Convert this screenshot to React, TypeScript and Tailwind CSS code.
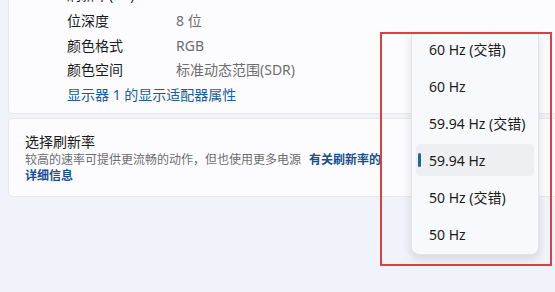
import React from "react";

const font = { fontFamily: '"Noto Sans", "Noto Sans CJK SC", sans-serif' };

const rows = [
  { label: "位深度", value: "8 位" },
  { label: "颜色格式", value: "RGB" },
  { label: "颜色空间", value: "标准动态范围(SDR)" },
];

const rates = ["60 Hz (交错)", "60 Hz", "59.94 Hz (交错)", "59.94 Hz", "50 Hz (交错)", "50 Hz"];

export default function App() {
  const selected = "59.94 Hz";

  return (
    <div
      className="relative w-[555px] h-[292px] overflow-hidden bg-[#f0f3f9] text-[#1b1b1b]"
      style={font}
    >
      <div className="pl-[8px] flex flex-col gap-[4px]">
        {/* 显示器信息 */}
        <div className="w-[570px] -mt-[16px] bg-[#fcfcfe] rounded-b-[4px] border-b border-l border-[#e6e8ec] pb-[6px]">
          {/* row scrolled mostly out of view */}
          <div className="h-[24.5px] flex items-start leading-[21px] text-[14px]">
            <span className="w-[109px] pl-[58px] shrink-0 box-content">刷新率(Hz)</span>
            <span className="text-[#6e6e6e]">59.940 Hz</span>
          </div>
          {rows.map((r) => (
            <div key={r.label} className="h-[24.5px] flex items-center text-[14px]">
              <span className="w-[109px] pl-[58px] shrink-0 box-content">{r.label}</span>
              <span className="text-[#6e6e6e]">{r.value}</span>
            </div>
          ))}
          <div className="h-[24.5px] flex items-center pl-[58px] text-[14px] text-[#1a5d9f]">
            显示器 1 的显示适配器属性
          </div>
        </div>

        {/* 选择刷新率 */}
        <div className="w-[570px] bg-[#fcfcfe] rounded-[4px] border border-[#e6e8ec] pt-[13px] pb-[12px] pl-[16px]">
          <div className="text-[14px] leading-[20px]">选择刷新率</div>
          <div className="text-[12px] leading-[16px] text-[#6e6e6e]">
            较高的速率可提供更流畅的动作，但也使用更多电源
            <span className="ml-[8px] font-bold text-[#17508f]">有关刷新率的</span>
            <br />
            <span className="font-bold text-[#17508f]">详细信息</span>
          </div>
        </div>
      </div>

      {/* 下拉菜单 */}
      <div className="absolute left-[411px] top-[32px] w-[128px] h-[223px] bg-[#f8f9fc] border border-[#e2e4e8] rounded-b-[8px] shadow-[0_4px_10px_rgba(0,0,0,0.12)] px-[4px] flex flex-col gap-[5px]">
        {rates.map((rate) => (
          <div
            key={rate}
            className={`relative h-[32px] shrink-0 flex items-center pl-[13px] text-[14px] rounded-[4px] ${
              rate === selected ? "bg-[#eeeff3]" : ""
            }`}
          >
            {rate === selected && (
              <span className="absolute left-[2px] top-[9px] w-[3px] h-[14px] rounded-full bg-[#1f64a6]" />
            )}
            {rate}
          </div>
        ))}
      </div>

      {/* 红色标注框 */}
      <div className="absolute left-[380px] top-[32px] w-[172px] h-[234px] border-[2px] border-[#dc4046] pointer-events-none" />
    </div>
  );
}
